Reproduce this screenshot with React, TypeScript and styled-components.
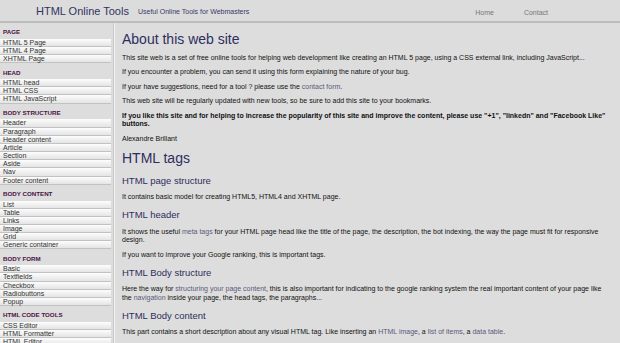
import styled, { createGlobalStyle } from "styled-components";

const GlobalStyle = createGlobalStyle`
  html, body {
    margin: 0;
    padding: 0;
    background: #dddddd;
    font-family: "Liberation Sans", Arial, sans-serif;
    overflow: hidden;
  }
`

const Page = styled.div`
  width: 620px;
  height: 343px;
  overflow: hidden;
  background: #dddddd;
`

const Header = styled.header`
  height: 21px;
  display: flex;
  align-items: center;
  padding-left: 36px;
  border-bottom: 2px solid #bcbcbc;
  background: #dcdcdc;
`

const Brand = styled.span`
  font-size: 11px;
  color: #333360;
  line-height: 12px;
  white-space: nowrap;
`

const Tagline = styled.span`
  font-size: 7px;
  color: #3a3a6a;
  margin-left: 9px;
  margin-top: 1px;
  white-space: nowrap;
`

const Nav = styled.nav`
  margin-left: auto;
  padding-right: 72px;
  padding-top: 3px;
  display: flex;
  gap: 30px;
  font-size: 7px;
  color: #777777;
`

const Body = styled.div`
  display: flex;
  align-items: stretch;
`

const Sidebar = styled.aside`
  width: 111px;
  padding-right: 2px;
  border-right: 1px solid #c8c8c8;
  box-shadow: 1px 0 0 #f2f2f2;
  flex-shrink: 0;
  min-height: 320px;
`

const SectionTitle = styled.div`
  font-size: 6.2px;
  font-weight: bold;
  color: #4a1242;
  line-height: 7px;
  padding: 5.4px 3px 3.45px;
`

const Item = styled.div`
  font-size: 7px;
  color: #333333;
  line-height: 7.15px;
  padding-left: 3px;
  white-space: nowrap;
  background: linear-gradient(to bottom, #fdfdfd, #e4e4e4);
  border-bottom: 1px solid #c2c2c2;
`

const Main = styled.main`
  flex: 1;
  padding: 8.45px 14px 0 8px;
  color: #111111;
`

const H1 = styled.h1`
  font-size: 14px;
  line-height: 16px;
  font-weight: normal;
  color: #2e2e5e;
  margin: 0 0 6.3px;
`

const H2 = styled.h2`
  font-size: 14px;
  line-height: 16px;
  font-weight: normal;
  color: #2e2e5e;
  margin: 7px 0 8.5px;
`

const H3 = styled.h3`
  font-size: 9.5px;
  line-height: 11px;
  font-weight: normal;
  color: #2e2e5e;
  margin: 7.5px 0;
`

const P = styled.p<{ $bold?: boolean }>`
  font-size: 7px;
  line-height: 8.5px;
  margin: 6px 0;
  font-weight: ${p => (p.$bold ? "bold" : "normal")};
`

const A = styled.a`
  color: #5a5a7c;
  text-decoration: none;
`

const menu = [
  { title: "PAGE", items: ["HTML 5 Page", "HTML 4 Page", "XHTML Page"] },
  { title: "HEAD", items: ["HTML head", "HTML CSS", "HTML JavaScript"] },
  {
    title: "BODY STRUCTURE",
    items: ["Header", "Paragraph", "Header content", "Article", "Section", "Aside", "Nav", "Footer content"],
  },
  { title: "BODY CONTENT", items: ["List", "Table", "Links", "Image", "Grid", "Generic container"] },
  { title: "BODY FORM", items: ["Basic", "Textfields", "Checkbox", "Radiobuttons", "Popup"] },
  { title: "HTML CODE TOOLS", items: ["CSS Editor", "HTML Formatter", "HTML Editor"] },
]

const App = () => {
  return (
    <Page>
      <GlobalStyle />
      <Header>
        <Brand>HTML Online Tools</Brand>
        <Tagline>Useful Online Tools for Webmasters</Tagline>
        <Nav>
          <span>Home</span>
          <span>Contact</span>
        </Nav>
      </Header>
      <Body>
        <Sidebar>
          {menu.map(section => (
            <div key={section.title}>
              <SectionTitle>{section.title}</SectionTitle>
              {section.items.map(item => (
                <Item key={item}>{item}</Item>
              ))}
            </div>
          ))}
        </Sidebar>
        <Main>
          <H1>About this web site</H1>
          <P>This site web is a set of free online tools for helping web development like creating an HTML 5 page, using a CSS external link, including JavaScript...</P>
          <P>If you encounter a problem, you can send it using this form explaining the nature of your bug.</P>
          <P>If your have suggestions, need for a tool ? please use the <A>contact form</A>.</P>
          <P>This web site will be regularly updated with new tools, so be sure to add this site to your bookmarks.</P>
          <P $bold>If you like this site and for helping to increase the popularity of this site and improve the content, please use "+1", "linkedn" and "Facebook Like" buttons.</P>
          <P>Alexandre Brillant</P>

          <H2>HTML tags</H2>
          <H3>HTML page structure</H3>
          <P>It contains basic model for creating HTML5, HTML4 and XHTML page.</P>
          <H3>HTML header</H3>
          <P>It shows the useful <A>meta tags</A> for your HTML page head like the title of the page, the description, the bot indexing, the way the page must fit for responsive design.</P>
          <P>If you want to improve your Google ranking, this is important tags.</P>
          <H3>HTML Body structure</H3>
          <P>Here the way for <A>structuring your page content</A>, this is also important for indicating to the google ranking system the real important content of your page like the <A>navigation</A> inside your page, the head tags, the paragraphs...</P>
          <H3>HTML Body content</H3>
          <P>This part contains a short description about any visual HTML tag. Like inserting an <A>HTML image</A>, a <A>list of items</A>, a <A>data table</A>.</P>
        </Main>
      </Body>
    </Page>
  )
}

export default App
